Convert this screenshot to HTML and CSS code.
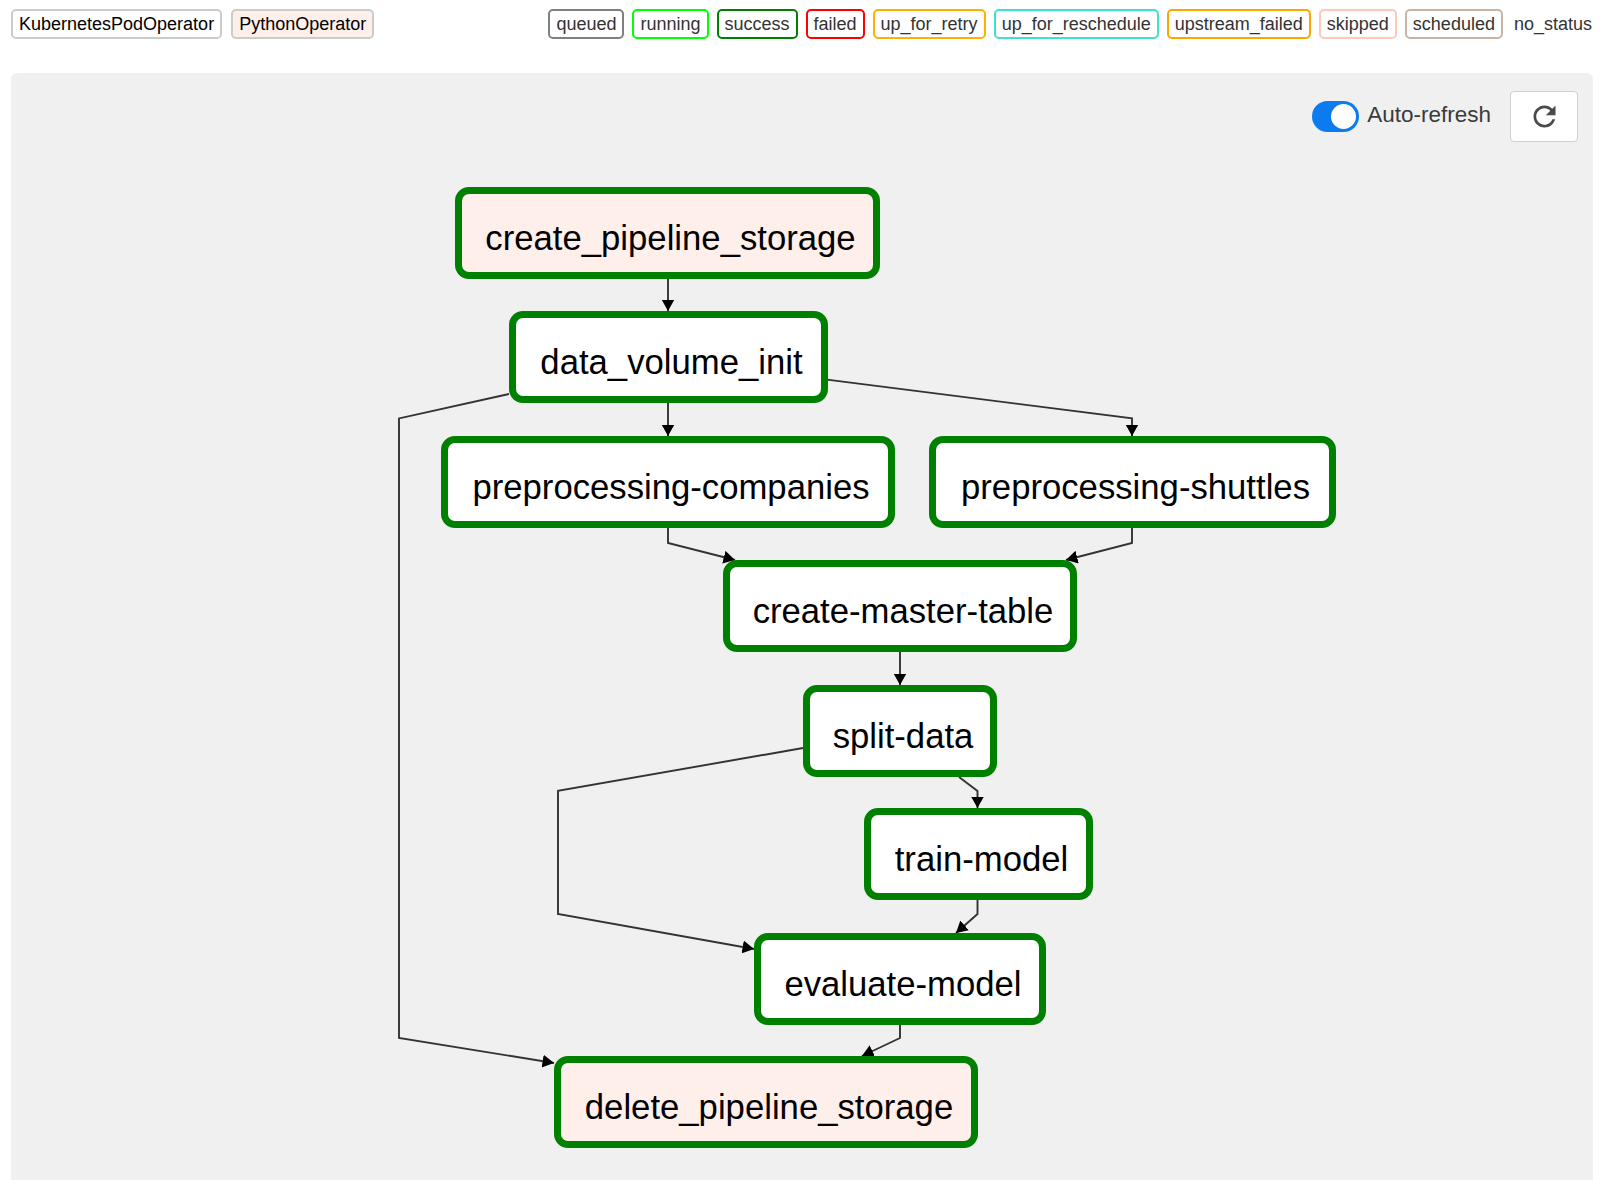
FILE: index.html
```html
<!DOCTYPE html>
<html>
<head>
<meta charset="utf-8">
<title>Graph</title>
<link rel="stylesheet" href="styles.css">
</head>
<body>
<div class="page">
  <div class="legend">
    <div class="legend-group">
      <span class="op">KubernetesPodOperator</span>
      <span class="op op-python">PythonOperator</span>
    </div>
    <div class="legend-group states">
      <span class="state s-queued">queued</span>
      <span class="state s-running">running</span>
      <span class="state s-success">success</span>
      <span class="state s-failed">failed</span>
      <span class="state s-retry">up_for_retry</span>
      <span class="state s-reschedule">up_for_reschedule</span>
      <span class="state s-upstream">upstream_failed</span>
      <span class="state s-skipped">skipped</span>
      <span class="state s-scheduled">scheduled</span>
      <span class="state s-none">no_status</span>
    </div>
  </div>

  <div class="panel">
    <div class="toolbar">
      <label class="switch-wrap">
        <span class="switch"><span class="knob"></span></span>
        <span class="switch-label">Auto-refresh</span>
      </label>
      <button class="refresh" type="button" aria-label="Refresh">
        <svg viewBox="0 0 24 24" width="33" height="33"><path fill="#4a4a4a" d="M17.65 6.35C16.2 4.9 14.21 4 12 4c-4.42 0-7.99 3.58-7.99 8s3.57 8 7.99 8c3.73 0 6.84-2.55 7.73-6h-2.08c-.82 2.33-3.04 4-5.65 4-3.31 0-6-2.69-6-6s2.69-6 6-6c1.66 0 3.14.69 4.22 1.78L13 11h7V4l-2.35 2.35z"/></svg>
      </button>
    </div>

    <div class="graph">
      <svg class="edges" width="1582" height="1040" viewBox="0 0 1582 1040">
        <defs>
          <marker id="arr" markerUnits="userSpaceOnUse" markerWidth="13" markerHeight="14" refX="11.5" refY="6.5" orient="auto">
            <path d="M0,0 L11.5,6.5 L0,13 z" fill="#000"/>
          </marker>
        </defs>
        <g fill="none" stroke="#333" stroke-width="1.9" marker-end="url(#arr)">
          <polyline points="657,137 657,169"/>
          <polyline points="657,261 657,294"/>
          <polyline points="816,237.6 1121,276.4 1121,294"/>
          <polyline points="498,252 388,276.4 388,896 543,921"/>
          <polyline points="657,386 657,401 724,418"/>
          <polyline points="1121,386 1121,401 1055,418"/>
          <polyline points="889,510 889,543"/>
          <polyline points="948,635 966.5,649 966.5,666"/>
          <polyline points="792,606 547,648.8 547,772 743,807"/>
          <polyline points="966.5,758 966.5,772 945,791"/>
          <polyline points="889,883 889,896 851,914"/>
        </g>
      </svg>

      <div class="node py" style="left:444px;top:45px;width:425px">create_pipeline_storage</div>
      <div class="node" style="left:498px;top:169px;width:319px">data_volume_init</div>
      <div class="node" style="left:430px;top:294px;width:454px">preprocessing-companies</div>
      <div class="node" style="left:918px;top:294px;width:407px">preprocessing-shuttles</div>
      <div class="node" style="left:712px;top:418px;width:354px">create-master-table</div>
      <div class="node" style="left:792px;top:543px;width:194px">split-data</div>
      <div class="node" style="left:853px;top:666px;width:229px">train-model</div>
      <div class="node" style="left:743px;top:791px;width:292px">evaluate-model</div>
      <div class="node py" style="left:543px;top:914px;width:424px">delete_pipeline_storage</div>
    </div>
  </div>
</div>
</body>
</html>
```

FILE: styles.css
```css
html, body {
  margin: 0;
  padding: 0;
  overflow: hidden;
  background: #fff;
  font-family: "Liberation Sans", Arial, sans-serif;
}

.page {
  padding: 9px 5px 0 11px;
}

.legend {
  display: flex;
  justify-content: space-between;
  align-items: center;
  height: 30px;
}

.legend-group {
  display: flex;
  gap: 9px;
}

.states { gap: 8px; }

.op, .state {
  display: inline-block;
  box-sizing: border-box;
  height: 30px;
  padding: 2px 6px;
  border: 2px solid #c9cdc9;
  border-radius: 5px;
  font-size: 18px;
  line-height: 22px;
  color: #000;
  background: #fff;
}

.op-python { background: #ffefeb; }

.state { color: #333; }
.s-queued { border-color: #808080; }
.s-running { border-color: #00ff00; }
.s-success { border-color: #008000; }
.s-failed { border-color: #ff0000; }
.s-retry { border-color: #ffb000; }
.s-reschedule { border-color: #40e0d0; }
.s-upstream { border-color: #ffa500; }
.s-skipped { border-color: #ffc8b8; }
.s-scheduled { border-color: #c8b4a4; }
.s-none { border: 0; padding: 4px 3px; }

.panel {
  margin-top: 34px;
  width: 1582px;
  height: 1120px;
  background: #f0f0f0;
  border-radius: 6px;
}

.toolbar {
  display: flex;
  justify-content: flex-end;
  align-items: center;
  padding: 18px 15px 0 0;
  height: 51px;
}

.switch-wrap {
  display: flex;
  align-items: center;
  gap: 8px;
  margin-right: 19px;
}

.switch {
  position: relative;
  display: block;
  width: 47px;
  height: 31px;
  border-radius: 16px;
  background: #0d7bf0;
}

.knob {
  position: absolute;
  right: 3px;
  top: 3px;
  width: 25px;
  height: 25px;
  border-radius: 50%;
  background: #fff;
}

.switch-label {
  font-size: 22.5px;
  color: #3a3a3a;
  line-height: 26px;
  padding-bottom: 4px;
}

.refresh {
  box-sizing: border-box;
  width: 68px;
  height: 51px;
  padding: 0;
  border: 1px solid #cfcfcf;
  border-radius: 4px;
  background: #fff;
  display: flex;
  align-items: center;
  justify-content: center;
}

.graph {
  position: relative;
  height: 1040px;
}

.edges {
  position: absolute;
  left: 0;
  top: 0;
}

.node {
  position: absolute;
  box-sizing: border-box;
  height: 92px;
  border: 7px solid #008000;
  border-radius: 14px;
  background: #fff;
  display: flex;
  align-items: center;
  justify-content: center;
  padding: 10px 0 0 6px;
  font-size: 34.7px;
  color: #000;
  white-space: nowrap;
}

.node.py { background: #ffefeb; }
```
